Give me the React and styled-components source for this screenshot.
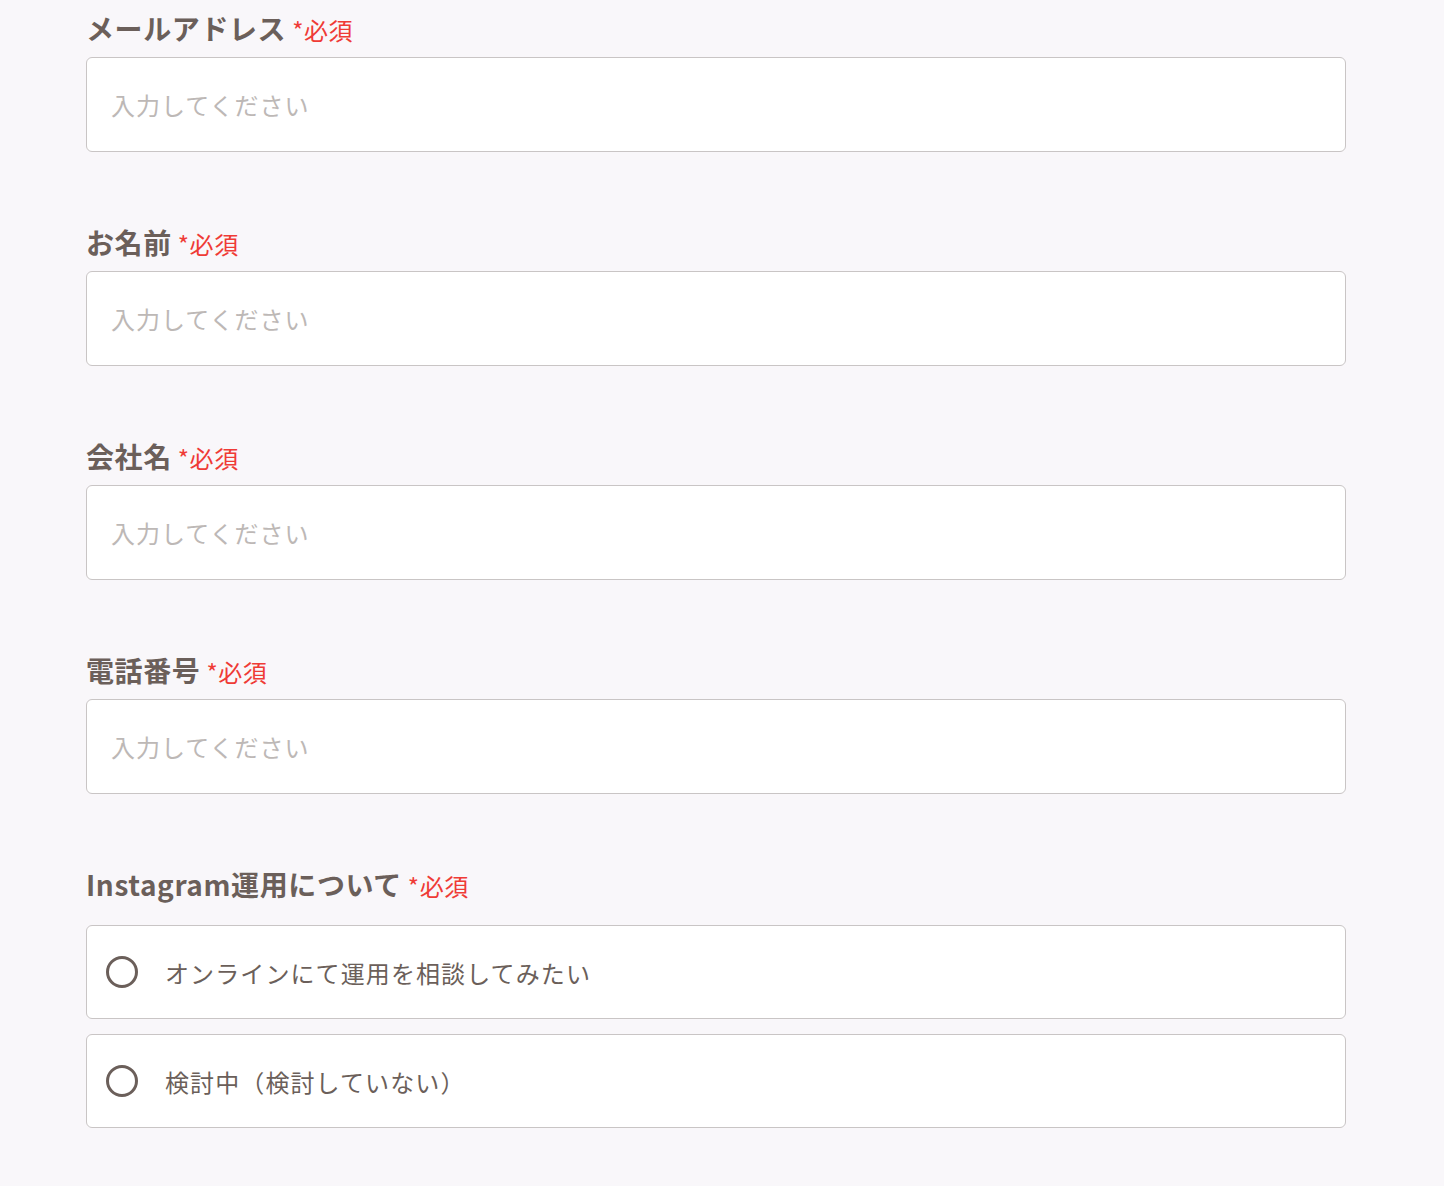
import styled, { createGlobalStyle } from "styled-components";

const GlobalStyle = createGlobalStyle`
  html, body {
    margin: 0;
    padding: 0;
    background: #f9f7fa;
  }
  body {
    font-family: "Noto Sans CJK JP", "Noto Sans", sans-serif;
    color: #6b5f5a;
  }
`;

const Form = styled.form`
  width: 1260px;
  margin-left: 86px;
  padding-top: 7px;
  display: flex;
  flex-direction: column;
  gap: 69px;
`;

const Field = styled.div`
  display: flex;
  flex-direction: column;
`;

const Label = styled.label`
  font-size: 28px;
  font-weight: 700;
  line-height: 42px;
  letter-spacing: 0.6px;
  color: #6b5f5a;
  margin-bottom: ${(p) => (p.$group ? "18px" : "6px")};
  white-space: nowrap;
`;

const Required = styled.span`
  font-size: 24px;
  font-weight: 400;
  letter-spacing: 0.6px;
  color: #ef3b36;
  margin-left: 6px;
`;

const Input = styled.input`
  box-sizing: border-box;
  width: 100%;
  height: 95px;
  border: 1px solid #c9c5c5;
  border-radius: 6px;
  background: #fff;
  padding: 0 24px;
  font-family: inherit;
  font-size: 24px;
  letter-spacing: 1px;
  color: #6b5f5a;
  outline: none;
  &::placeholder {
    color: #bdb8b6;
  }
`;

const Options = styled.div`
  display: flex;
  flex-direction: column;
  gap: 15px;
`;

const Option = styled.label`
  box-sizing: border-box;
  height: 94px;
  border: 1px solid #c9c5c5;
  border-radius: 6px;
  background: #fff;
  display: flex;
  align-items: center;
  padding-left: 19px;
  cursor: pointer;
`;

const Radio = styled.span`
  box-sizing: border-box;
  width: 32px;
  height: 32px;
  border: 3px solid #6b5f5a;
  border-radius: 50%;
  flex-shrink: 0;
`;

const OptionText = styled.span`
  margin-left: 27px;
  font-size: 24px;
  letter-spacing: 1.1px;
  color: #6b5f5a;
`;

const fields = ["メールアドレス", "お名前", "会社名", "電話番号"];
const options = ["オンラインにて運用を相談してみたい", "検討中（検討していない）"];

export default function App() {
  return (
    <>
      <GlobalStyle />
      <Form>
        {fields.map((f) => (
          <Field key={f}>
            <Label>
              {f}
              <Required>*必須</Required>
            </Label>
            <Input placeholder="入力してください" />
          </Field>
        ))}
        <Field>
          <Label $group>
            Instagram運用について
            <Required>*必須</Required>
          </Label>
          <Options>
            {options.map((o) => (
              <Option key={o}>
                <Radio />
                <OptionText>{o}</OptionText>
              </Option>
            ))}
          </Options>
        </Field>
      </Form>
    </>
  );
}
